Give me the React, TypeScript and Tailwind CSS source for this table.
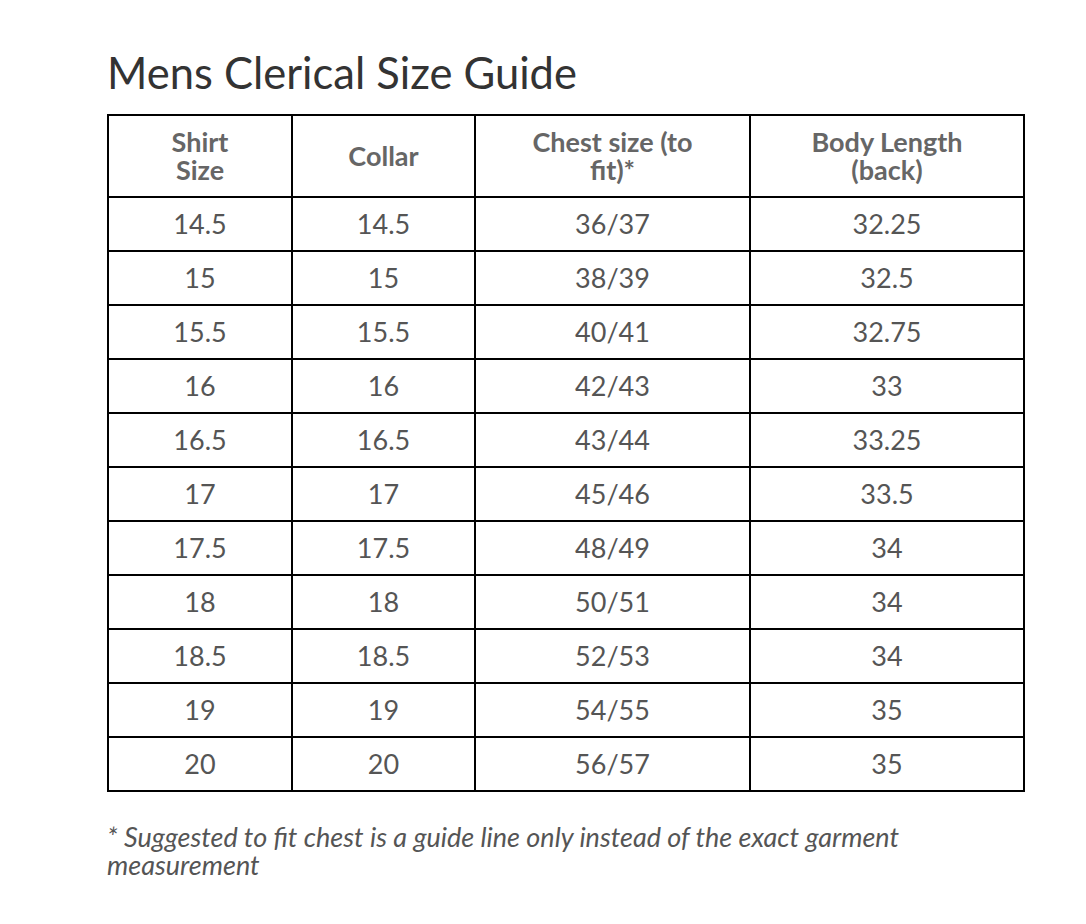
import React from "react";

const rows: [string, string, string, string][] = [
  ["14.5", "14.5", "36/37", "32.25"],
  ["15", "15", "38/39", "32.5"],
  ["15.5", "15.5", "40/41", "32.75"],
  ["16", "16", "42/43", "33"],
  ["16.5", "16.5", "43/44", "33.25"],
  ["17", "17", "45/46", "33.5"],
  ["17.5", "17.5", "48/49", "34"],
  ["18", "18", "50/51", "34"],
  ["18.5", "18.5", "52/53", "34"],
  ["19", "19", "54/55", "35"],
  ["20", "20", "56/57", "35"],
];

export default function App() {
  return (
    <div className="min-h-[924px] w-[1086px] bg-white pl-[107px] pt-[48px]" style={{ fontFamily: "Lato, 'Open Sans', sans-serif" }}>
      <h1 className="text-[43.5px] leading-[48px] text-[#333] font-normal">Mens Clerical Size Guide</h1>
      <table className="mt-[18px] w-[916px] border-collapse border-2 border-black table-fixed">
        <colgroup>
          <col className="w-[184px]" />
          <col className="w-[183px]" />
          <col className="w-[275px]" />
          <col className="w-[274px]" />
        </colgroup>
        <thead>
          <tr className="h-[82px]">
            {["Shirt Size", "Collar", "Chest size (to fit)*", "Body Length (back)"].map((h, i) => (
              <th
                key={i}
                className={`border-2 border-black text-[27px] leading-[28px] font-bold text-[#666] align-middle ${
                  i === 0 ? "px-[50px]" : i === 1 ? "px-[20px]" : "px-[40px]"
                }`}
              >
                {h}
              </th>
            ))}
          </tr>
        </thead>
        <tbody>
          {rows.map((r, ri) => (
            <tr key={ri} className="h-[54px]">
              {r.map((c, ci) => (
                <td key={ci} className="border-2 border-black text-center text-[27px] leading-[28px] text-[#555] align-middle">
                  {c}
                </td>
              ))}
            </tr>
          ))}
        </tbody>
      </table>
      <p className="mt-[31px] w-[860px] italic text-[27px] leading-[28px] text-[#555]">
        * Suggested to fit chest is a guide line only instead of the exact garment measurement
      </p>
    </div>
  );
}
